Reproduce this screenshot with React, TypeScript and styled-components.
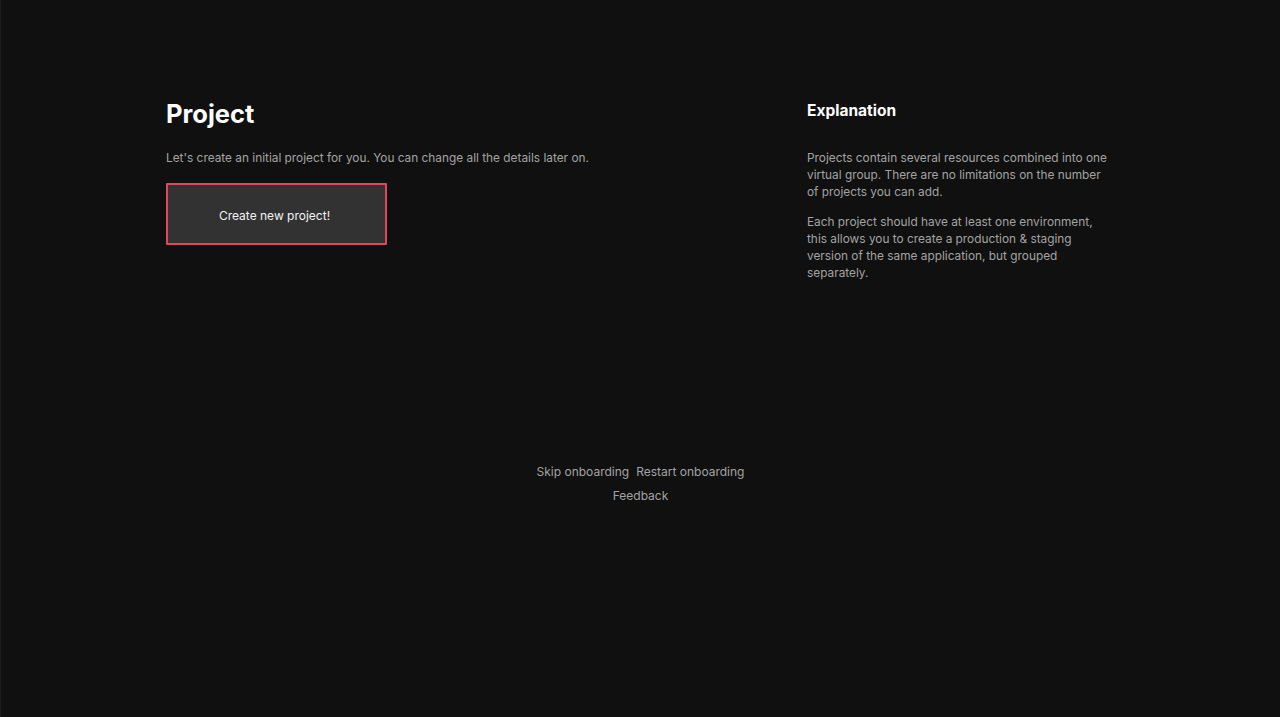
import styled, { createGlobalStyle } from "styled-components";

const GlobalStyle = createGlobalStyle`
  html, body {
    margin: 0;
    padding: 0;
    background: #101010;
    font-family: Inter, "Noto Sans", sans-serif;
    -webkit-font-smoothing: antialiased;
  }
`;

const Page = styled.div`
  min-height: 717px;
  box-sizing: border-box;
  border-left: 1px solid #1d1d1d;
  padding-top: 97px;
  display: flex;
  flex-direction: column;
  align-items: center;
`;

const Columns = styled.div`
  width: 948px;
  margin-left: -1px;
  display: grid;
  grid-template-columns: 641px 307px;
`;

const Column = styled.section`
  display: flex;
  flex-direction: column;
`;

const Title = styled.h1`
  margin: 0;
  color: #ffffff;
  font-size: 25.5px;
  font-weight: 700;
  line-height: 33px;
`;

const Subtitle = styled.h2`
  margin: 4px 0 0;
  color: #ffffff;
  font-size: 15.5px;
  font-weight: 700;
  line-height: 20px;
`;

const Text = styled.p<{ $top: number }>`
  margin: ${(p) => p.$top}px 0 0;
  color: #a3a3a3;
  font-size: 11.85px;
  line-height: 17px;
`;

const CreateButton = styled.button`
  margin-top: 16px;
  width: 221px;
  height: 62px;
  box-sizing: border-box;
  padding: 2px 4px 0 0;
  background: #323232;
  border: 2px solid #e1465b;
  border-radius: 1px;
  color: #f2f2f2;
  font-family: inherit;
  font-size: 12px;
  cursor: pointer;
`;

const Footer = styled.footer`
  margin-top: 181px;
  display: flex;
  flex-direction: column;
  align-items: center;
  gap: 7px;
`;

const LinkRow = styled.div`
  display: flex;
  gap: 7px;
`;

const FooterLink = styled.a`
  color: #a3a3a3;
  font-size: 12px;
  line-height: 17px;
  text-decoration: none;
  cursor: pointer;
`;

export default function App() {
  return (
    <>
      <GlobalStyle />
      <Page>
        <Columns>
          <Column>
            <Title>Project</Title>
            <Text $top={20}>Let's create an initial project for you. You can change all the details later on.</Text>
            <CreateButton>Create new project!</CreateButton>
          </Column>
          <Column>
            <Subtitle>Explanation</Subtitle>
            <Text $top={29}>
              Projects contain several resources combined into one virtual group. There are no limitations on the
              number of projects you can add.
            </Text>
            <Text $top={13}>
              Each project should have at least one environment, this allows you to create a production &amp; staging
              version of the same application, but grouped separately.
            </Text>
          </Column>
        </Columns>
        <Footer>
          <LinkRow>
            <FooterLink>Skip onboarding</FooterLink>
            <FooterLink>Restart onboarding</FooterLink>
          </LinkRow>
          <FooterLink>Feedback</FooterLink>
        </Footer>
      </Page>
    </>
  );
}
